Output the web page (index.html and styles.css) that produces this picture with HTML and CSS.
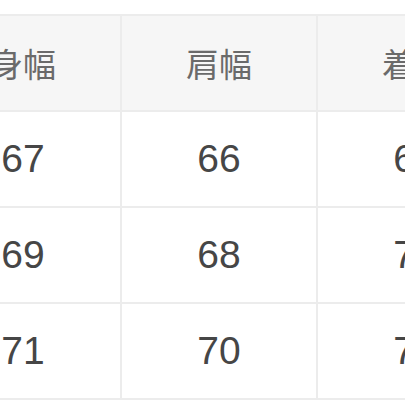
FILE: index.html
```html
<!DOCTYPE html>
<html lang="ja">
<head>
<meta charset="utf-8">
<link rel="stylesheet" href="styles.css">
</head>
<body>
<div class="wrap">
<table class="size-table">
  <thead>
    <tr><th>身幅</th><th>肩幅</th><th>着丈</th></tr>
  </thead>
  <tbody>
    <tr><td>67</td><td>66</td><td>68</td></tr>
    <tr><td>69</td><td>68</td><td>70</td></tr>
    <tr><td>71</td><td>70</td><td>72</td></tr>
  </tbody>
</table>
</div>
</body>
</html>
```
FILE: styles.css
```css
html, body {
  margin: 0;
  padding: 0;
  background: #ffffff;
  overflow: hidden;
}
.wrap {
  padding-top: 14px;
  width: 405px;
  height: 405px;
  overflow: hidden;
  box-sizing: border-box;
}
.size-table {
  margin-left: -76px;
  border-collapse: collapse;
  table-layout: fixed;
  width: 590px;
}
.size-table th,
.size-table td {
  width: 194px;
  height: 94px;
  padding: 0;
  border: 2px solid #ececec;
  text-align: center;
  vertical-align: middle;
}
.size-table th {
  background: #f6f6f6;
  font-family: "Noto Sans CJK JP", sans-serif;
  font-weight: 400;
  font-size: 33px;
  color: #6a6a6a;
}
.size-table td {
  font-family: "Liberation Sans", Arial, sans-serif;
  font-size: 39px;
  color: #464646;
}
```
